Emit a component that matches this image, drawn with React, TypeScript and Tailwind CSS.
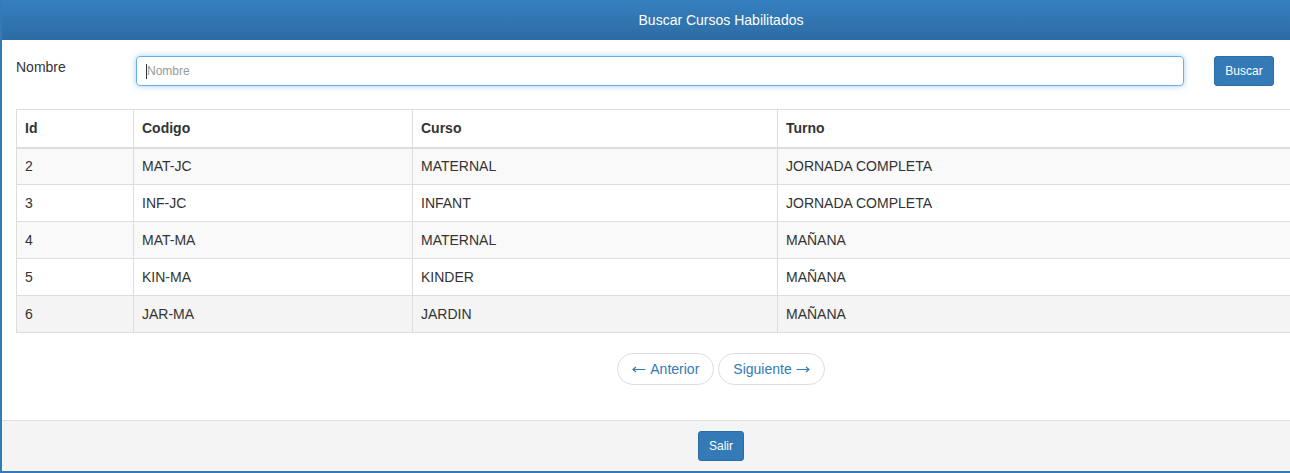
import React from 'react';

const rows = [
  { id: 2, codigo: 'MAT-JC', curso: 'MATERNAL', turno: 'JORNADA COMPLETA' },
  { id: 3, codigo: 'INF-JC', curso: 'INFANT', turno: 'JORNADA COMPLETA' },
  { id: 4, codigo: 'MAT-MA', curso: 'MATERNAL', turno: 'MAÑANA' },
  { id: 5, codigo: 'KIN-MA', curso: 'KINDER', turno: 'MAÑANA' },
  { id: 6, codigo: 'JAR-MA', curso: 'JARDIN', turno: 'MAÑANA' },
];

const Arrow = ({ left }: { left?: boolean }) => (
  <svg width="14" height="10" viewBox="0 0 14 10" className="inline-block" style={{ transform: left ? 'scaleX(-1)' : undefined }}>
    <path d="M0.5 5.5H13M10 3l3 2.5L10 8" fill="none" stroke="currentColor" strokeWidth="1.2" />
  </svg>
);

export default function App() {
  return (
    <div className="w-[1290px] h-[473px] overflow-hidden bg-white text-[14px] text-[#333]" style={{ fontFamily: '"Liberation Sans", Arial, sans-serif' }}>
      <div className="w-[1440px] h-[473px] flex flex-col border-l-2 border-b-2 border-[#337ab7] bg-white">
        {/* Header */}
        <div className="h-[40px] flex items-center justify-center bg-gradient-to-b from-[#3580c0] to-[#2d6ca3] text-white">
          Buscar Cursos Habilitados
        </div>

        {/* Body */}
        <div className="flex-1 flex flex-col px-[14px]">
          <div className="flex items-start pt-[16px]">
            <label className="w-[120px] pt-[1px]">Nombre</label>
            <div className="w-[1048px] h-[30px] rounded-[4px] border border-[#66afe9] shadow-[0_0_6px_rgba(102,175,233,0.6)] flex items-center px-[9px]">
              <span className="w-px h-[15px] bg-[#333]" />
              <span className="text-[12px] text-[#999]">Nombre</span>
            </div>
            <button className="ml-[30px] w-[60px] h-[30px] rounded-[3px] bg-[#337ab7] border border-[#2e6da4] text-white text-[12px]">
              Buscar
            </button>
          </div>

          <table className="mt-[23px] w-[1410px] border-collapse border border-[#ddd]">
            <thead>
              <tr className="h-[38px] border-b-2 border-[#ddd]">
                <th className="w-[117px] text-left font-bold px-[8px] border-r border-[#ddd]">Id</th>
                <th className="w-[279px] text-left font-bold px-[8px] border-r border-[#ddd]">Codigo</th>
                <th className="w-[365px] text-left font-bold px-[8px] border-r border-[#ddd]">Curso</th>
                <th className="text-left font-bold px-[8px]">Turno</th>
              </tr>
            </thead>
            <tbody>
              {rows.map((r, i) => (
                <tr key={r.id} className={`h-[37px] border-b border-[#ddd] ${i === 4 ? 'bg-[#f4f4f4]' : i % 2 === 0 ? 'bg-[#f9f9f9]' : 'bg-white'}`}>
                  <td className="px-[8px] border-r border-[#ddd]">{r.id}</td>
                  <td className="px-[8px] border-r border-[#ddd]">{r.codigo}</td>
                  <td className="px-[8px] border-r border-[#ddd]">{r.curso}</td>
                  <td className="px-[8px]">{r.turno}</td>
                </tr>
              ))}
            </tbody>
          </table>

          <div className="flex justify-center gap-[4px] mt-[20px]">
            <button className="h-[32px] px-[14px] rounded-full border border-[#ddd] bg-white text-[#337ab7] flex items-center gap-[4px]">
              <Arrow left /> Anterior
            </button>
            <button className="h-[32px] px-[14px] rounded-full border border-[#ddd] bg-white text-[#337ab7] flex items-center gap-[4px]">
              Siguiente <Arrow />
            </button>
          </div>
        </div>

        {/* Footer */}
        <div className="h-[51px] border-t border-[#e0e0e0] bg-[#f4f4f4] flex justify-center pt-[10px]">
          <button className="w-[46px] h-[30px] rounded-[3px] bg-[#337ab7] border border-[#2e6da4] text-white text-[12px]">
            Salir
          </button>
        </div>
      </div>
    </div>
  );
}
